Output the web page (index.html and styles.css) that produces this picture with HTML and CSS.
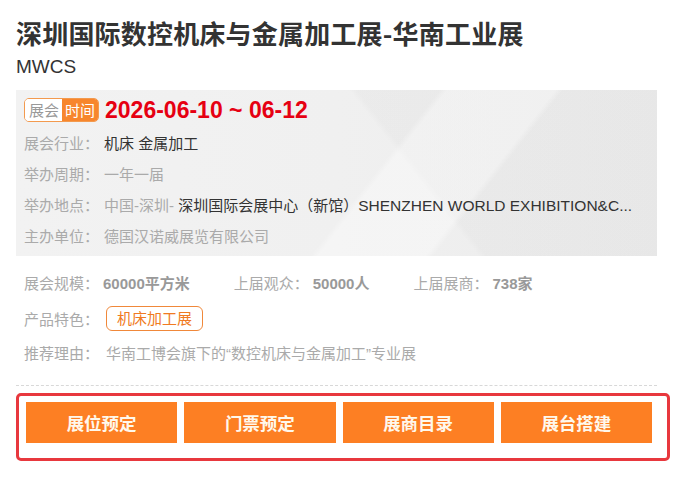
FILE: index.html
```html
<!DOCTYPE html>
<html lang="zh-CN">
<head>
<meta charset="utf-8">
<title>深圳国际数控机床与金属加工展-华南工业展</title>
<link rel="stylesheet" href="styles.css">
</head>
<body>
<div class="page">
  <h1 class="title">深圳国际数控机床与金属加工展-华南工业展</h1>
  <div class="subtitle">MWCS</div>

  <div class="infobox">
    <div class="date-row">
      <span class="badge"><span class="badge-l">展会</span><span class="badge-r">时间</span></span>
      <span class="date">2026-06-10 ~ 06-12</span>
    </div>
    <div class="row"><span class="label">展会行业：</span><span class="val dark">机床 金属加工</span></div>
    <div class="row"><span class="label">举办周期：</span><span class="val">一年一届</span></div>
    <div class="row"><span class="label">举办地点：</span><span class="val">中国-深圳- <span class="dark">深圳国际会展中心（新馆）<span class="latin">SHENZHEN WORLD EXHIBITION&amp;C...</span></span></span></div>
    <div class="row"><span class="label">主办单位：</span><span class="val">德国汉诺威展览有限公司</span></div>
  </div>

  <div class="details">
    <div class="stats">
      <div class="stat"><span class="stat-l">展会规模：</span><b class="stat-v">60000平方米</b></div>
      <div class="stat"><span class="stat-l">上届观众：</span><b class="stat-v">50000人</b></div>
      <div class="stat"><span class="stat-l">上届展商：</span><b class="stat-v">738家</b></div>
    </div>
    <div class="drow"><span class="dlabel">产品特色：</span><span class="tag">机床加工展</span></div>
    <div class="drow"><span class="dlabel">推荐理由：</span><span class="dval">华南工博会旗下的“数控机床与金属加工”专业展</span></div>
  </div>

  <div class="divider"></div>

  <div class="actions">
    <a class="btn">展位预定</a>
    <a class="btn">门票预定</a>
    <a class="btn">展商目录</a>
    <a class="btn">展台搭建</a>
  </div>
</div>
</body>
</html>
```

FILE: styles.css
```css
* { box-sizing: border-box; }
html, body { margin: 0; padding: 0; background: #fff; }
body {
  font-family: "Liberation Sans", "Noto Sans CJK SC", sans-serif;
  color: #333;
}
.page {
  width: 642px;
  margin-left: 16px;
  padding-top: 16px;
}
.title {
  margin: 0;
  font-size: 26px;
  line-height: 34px;
  font-weight: bold;
  color: #333;
  font-family: "Noto Sans CJK SC", sans-serif;
  letter-spacing: 0.2px;
  white-space: nowrap;
}
.subtitle {
  margin-top: 5px;
  font-size: 19px;
  line-height: 24px;
  color: #333;
}
.infobox {
  margin-top: 11px;
  width: 641px;
  padding: 8px 12px 4px 8px;
  background:
    linear-gradient(128deg, rgba(255,255,255,0) 0%, rgba(255,255,255,0) 55%, rgba(255,255,255,0.35) 56%, rgba(255,255,255,0.35) 70%, rgba(0,0,0,0) 71%),
    linear-gradient(52deg, rgba(0,0,0,0) 0%, rgba(0,0,0,0) 60%, rgba(0,0,0,0.018) 61%, rgba(0,0,0,0.018) 100%),
    linear-gradient(90deg, #f2f2f2 0%, #f0f0f0 50%, #ececec 100%);
}
.date-row {
  display: flex;
  align-items: center;
  height: 24px;
  margin-bottom: 6px;
}
.badge {
  display: inline-flex;
  height: 24px;
  border: 1px solid #f39a4e;
  border-radius: 5px;
  overflow: hidden;
  font-size: 15px;
  line-height: 22px;
  font-family: "Noto Sans CJK SC", sans-serif;
}
.badge-l {
  background: #fff;
  color: #999;
  padding: 0 3px 0 4px;
}
.badge-r {
  background: #f7862d;
  color: #fff;
  padding: 0 3px 0 3px;
}
.date {
  margin-left: 6px;
  font-size: 23px;
  font-weight: bold;
  color: #e60012;
  line-height: 24px;
}
.row {
  display: flex;
  height: 31px;
  line-height: 31px;
  font-size: 15px;
}
.label {
  flex: 0 0 80px;
  color: #aaa;
}
.val {
  color: #aaa;
  white-space: nowrap;
}
.dark { color: #333; }
.latin { font-size: 15.5px; }
.details {
  margin-top: 11px;
  padding-left: 8px;
  font-size: 15px;
}
.stats {
  display: flex;
  height: 34px;
  line-height: 34px;
  gap: 44px;
}
.stat-l {
  color: #aaa;
  margin-right: 4px;
}
.stat-v {
  color: #999;
  font-weight: bold;
}
.drow {
  display: flex;
  align-items: center;
  height: 34px;
}
.dlabel {
  flex: 0 0 82px;
  color: #aaa;
}
.tag {
  display: inline-block;
  height: 25px;
  line-height: 23px;
  padding: 0 10px;
  border: 1px solid #f0883a;
  border-radius: 6px;
  color: #f07a22;
}
.dval { color: #aaa; }
.divider {
  margin-top: 16px;
  width: 641px;
  border-top: 1px dashed #d8d8d8;
}
.actions {
  margin-top: 7px;
  width: 654px;
  border: 3px solid #e8383e;
  border-radius: 5px;
  padding: 6px 15px 15px 7px;
  display: grid;
  grid-template-columns: repeat(4, 1fr);
  gap: 7px;
}
.btn {
  display: flex;
  align-items: center;
  justify-content: center;
  height: 41px;
  background: #fd7f23;
  color: #fff8ec;
  font-size: 17.5px;
  font-weight: bold;
  font-family: "Noto Sans CJK SC", sans-serif;
  text-decoration: none;
}
```
